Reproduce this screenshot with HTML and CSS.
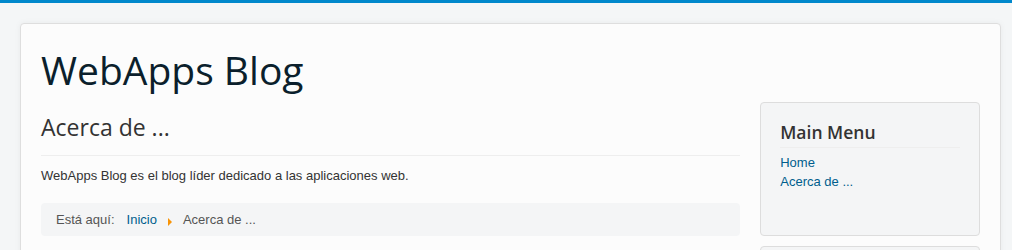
FILE: index.html
```html
<!DOCTYPE html>
<html lang="es">
<head>
    <meta charset="UTF-8">
    <title>WebApps Blog - Acerca de ...</title>
    <link rel="stylesheet" href="styles.css">
</head>
<body>

<div class="body">
    <div class="container">
        <header class="header">
            <a class="brand" href="#">WebApps Blog</a>
        </header>

        <div class="row">
            <main class="content">
                <div class="page-header">
                    <h2>Acerca de ...</h2>
                </div>
                <p>WebApps Blog es el blog líder dedicado a las aplicaciones web.</p>

                <ul class="breadcrumb">
                    <li class="active">Está aquí:</li>
                    <li class="crumb"><a href="#">Inicio</a><span class="divider"></span></li>
                    <li class="active">Acerca de ...</li>
                </ul>
            </main>

            <aside class="sidebar">
                <div class="well">
                    <h3 class="page-header">Main Menu</h3>
                    <ul class="menu">
                        <li><a href="#">Home</a></li>
                        <li><a href="#">Acerca de ...</a></li>
                    </ul>
                </div>
                <div class="well"></div>
            </aside>
        </div>
    </div>
</div>

</body>
</html>
```

FILE: styles.css
```css
html, body {
    margin: 0;
    padding: 0;
}

body {
    background: #f4f6f7;
    border-top: 3px solid #0088cc;
    color: #333;
    font-family: "Liberation Sans", Arial, sans-serif;
    font-size: 13px;
    line-height: 18px;
    height: 247px;
    overflow: hidden;
}

.body {
    padding: 20px 11px 0 20px;
}

.container {
    background: #fcfcfc;
    border: 1px solid #dedede;
    border-radius: 4px;
    box-shadow: 0 0 6px rgba(0,0,0,0.05);
    padding: 20px;
    min-height: 300px;
}

a {
    color: #005e8d;
    text-decoration: none;
}

.header {
    margin-bottom: 8px;
}

.brand {
    display: inline-block;
    color: #0b1f2c;
    font-family: "Open Sans", sans-serif;
    font-size: 39px;
    line-height: 48px;
    padding-top: 2px;
}

.row {
    display: flex;
    gap: 20px;
}

.content {
    width: 700px;
}

.sidebar {
    width: 220px;
}

.page-header {
    border-bottom: 1px solid #eee;
    margin: 0 0 11px;
}

.page-header h2 {
    font-family: "Open Sans", sans-serif;
    font-size: 23px;
    font-weight: 400;
    line-height: 30px;
    margin: 0;
    padding: 10px 0 13px;
}

p {
    margin: 0 0 18px;
}

.breadcrumb {
    list-style: none;
    margin: 0;
    padding: 8px 15px 7px;
    background: #f4f5f6;
    border-radius: 4px;
    display: flex;
    align-items: center;
    color: #555;
}

.breadcrumb li {
    display: flex;
    align-items: center;
    margin-right: 12px;
}

.breadcrumb .crumb {
    margin-right: 11px;
}

.breadcrumb .divider {
    display: inline-block;
    width: 0;
    height: 0;
    border-top: 4px solid transparent;
    border-bottom: 4px solid transparent;
    border-left: 4px solid #f89406;
    margin-left: 11px;
    margin-top: 3px;
}

.well {
    background: #f4f5f6;
    border: 1px solid #ddd;
    border-radius: 4px;
    padding: 19px;
    min-height: 94px;
    margin-bottom: 10px;
}

.well h3.page-header {
    font-family: "Open Sans", sans-serif;
    font-size: 17.5px;
    font-weight: 600;
    line-height: 21px;
    margin: 0 0 5px;
    padding: 0 0 4px;
}

.menu {
    list-style: none;
    margin: 0;
    padding: 0;
}

.menu li {
    line-height: 19px;
}
```
